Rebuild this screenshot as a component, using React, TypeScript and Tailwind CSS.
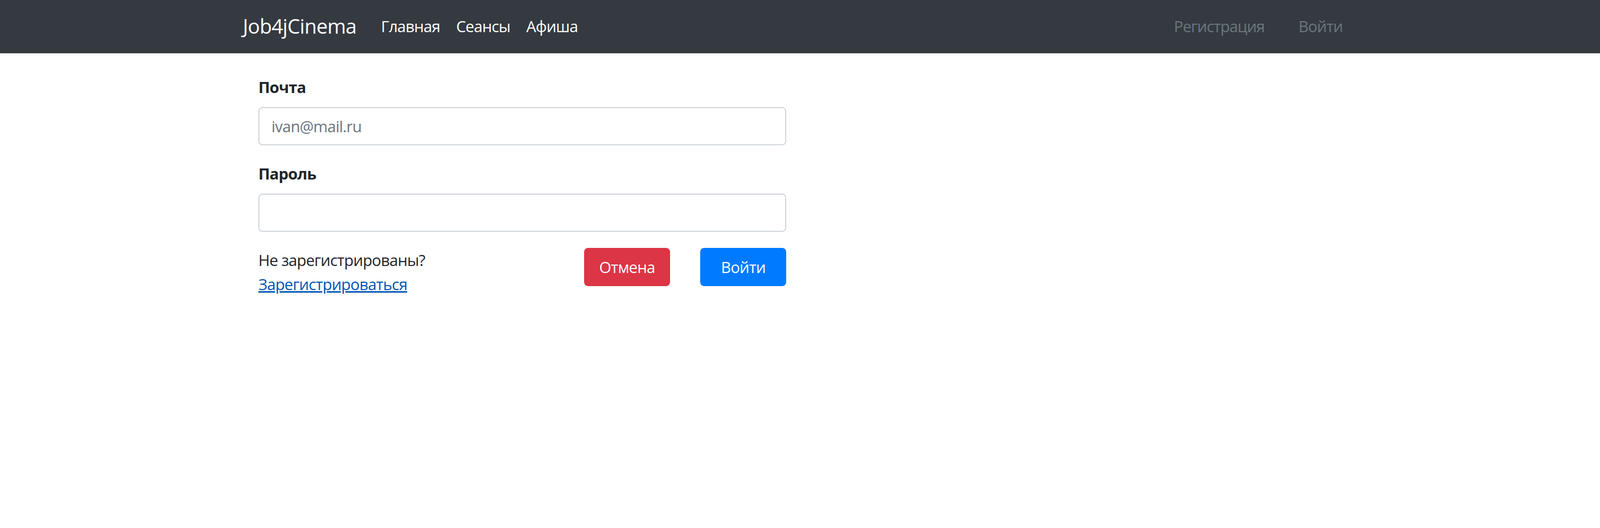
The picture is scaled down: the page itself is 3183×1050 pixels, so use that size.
export default function App() {
  return (
    <div className="min-h-[1050px] bg-white font-['Open_Sans',sans-serif] text-[#212529]">
      <nav className="h-[106px] bg-[#343a40] flex items-center pb-[3px] pl-[483px] pr-[512px]">
        <a href="#" className="text-[40px] leading-[60px] tracking-[-0.7px] text-white">Job4jCinema</a>
        <div className="ml-[49px] flex gap-[32px] text-[31px] leading-[48px] tracking-[-0.8px] text-white">
          <a href="#">Главная</a>
          <a href="#">Сеансы</a>
          <a href="#">Афиша</a>
        </div>
        <div className="ml-auto flex gap-[68px] text-[31px] leading-[48px] tracking-[-1px] text-[#6c757d]">
          <a href="#">Регистрация</a>
          <a href="#">Войти</a>
        </div>
      </nav>
      <form className="ml-[514px] w-[1050px] pt-[43px] text-[31px] leading-[48px] tracking-[-0.8px]">
        <div className="mb-[32px]">
          <label className="block font-bold mb-[16px]">Почта</label>
          <input
            type="email"
            placeholder="ivan@mail.ru"
            className="block w-full h-[76px] border-2 border-[#ced4da] rounded-[8px] px-[24px] text-[31px] tracking-[-0.8px] outline-none placeholder:text-[#6c757d]"
          />
        </div>
        <div className="mb-[32px]">
          <label className="block font-bold mb-[16px]">Пароль</label>
          <input
            type="password"
            className="block w-full h-[76px] border-2 border-[#ced4da] rounded-[8px] px-[24px] text-[31px] outline-none"
          />
        </div>
        <div className="flex justify-between items-start">
          <div>
            <div>Не зарегистрированы?</div>
            <a href="#" className="text-[#0056b3] underline">Зарегистрироваться</a>
          </div>
          <div className="flex gap-[60px]">
            <button type="button" className="w-[171px] h-[76px] rounded-[8px] bg-[#dc3545] text-white text-[31px] tracking-[-0.8px]">Отмена</button>
            <button type="button" className="w-[171px] h-[76px] rounded-[8px] bg-[#007bff] text-white text-[31px] tracking-[-0.8px]">Войти</button>
          </div>
        </div>
      </form>
    </div>
  );
}
